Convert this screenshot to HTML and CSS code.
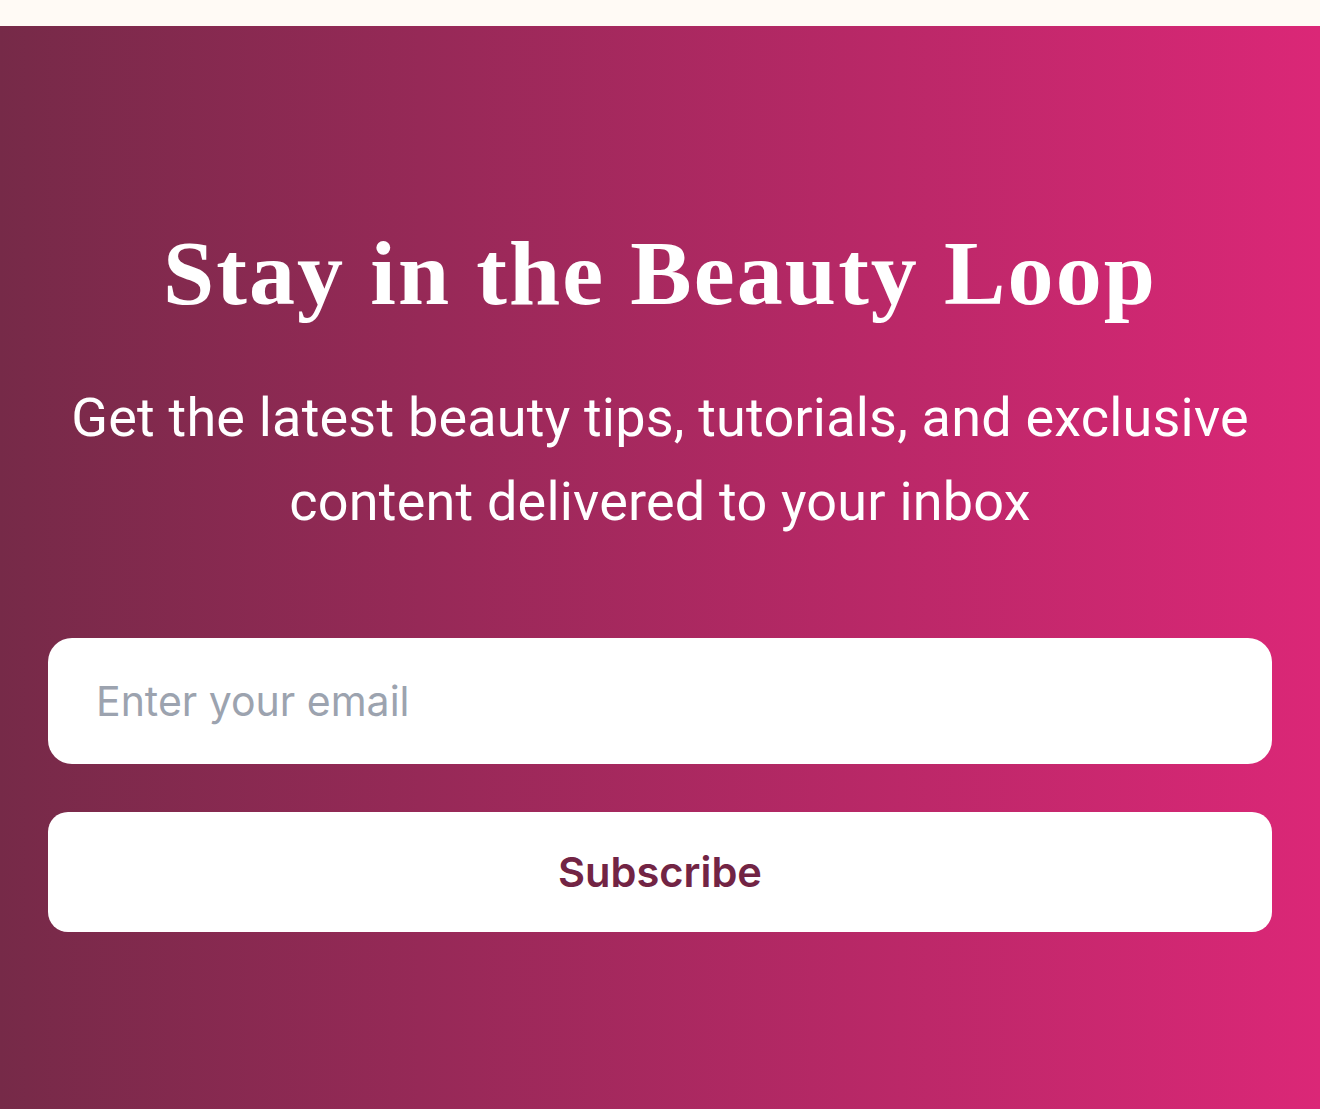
FILE: index.html
```html
<!DOCTYPE html>
<html lang="en">
<head>
<meta charset="utf-8">
<title>Stay in the Beauty Loop</title>
<link rel="stylesheet" href="styles.css">
</head>
<body>
<div class="topbar"></div>
<section class="newsletter">
  <h2 class="title">Stay in the Beauty Loop</h2>
  <p class="subtitle">Get the latest beauty tips, tutorials, and exclusive content delivered to your inbox</p>
  <form class="form" onsubmit="return false;">
    <input class="email" type="email" placeholder="Enter your email">
    <button class="subscribe" type="submit">Subscribe</button>
  </form>
</section>
</body>
</html>
```

FILE: styles.css
```css
html, body {
  margin: 0;
  padding: 0;
}
body {
  background: #fffaf5;
  width: 1320px;
  height: 1109px;
  overflow: hidden;
}
.topbar {
  height: 26px;
  background: #fffaf5;
}
.newsletter {
  background: linear-gradient(to right, #762a48, #db2777);
  padding: 193px 48px 200px;
  display: flex;
  flex-direction: column;
  align-items: stretch;
  text-align: center;
  color: #ffffff;
}
.title {
  margin: 0;
  font-family: "Liberation Serif", "DejaVu Serif", serif;
  font-weight: 700;
  font-size: 92px;
  line-height: 108px;
  letter-spacing: 2.1px;
}
.subtitle {
  margin: 49px 0 0;
  font-family: Roboto, "Liberation Sans", sans-serif;
  font-weight: 400;
  font-size: 54px;
  line-height: 84px;
  letter-spacing: 0.2px;
}
.form {
  margin-top: 94px;
  display: flex;
  flex-direction: column;
  gap: 48px;
}
.email {
  box-sizing: border-box;
  height: 126px;
  width: 100%;
  border: none;
  outline: none;
  border-radius: 24px;
  background: #ffffff;
  padding: 0 48px;
  font-family: Inter, "Noto Sans", sans-serif;
  font-size: 41px;
  color: #1f2937;
}
.email::placeholder {
  color: #9ca3af;
}
.subscribe {
  box-sizing: border-box;
  height: 120px;
  width: 100%;
  border: none;
  border-radius: 20px;
  background: #ffffff;
  font-family: Inter, "Noto Sans", sans-serif;
  font-weight: 600;
  font-size: 41.6px;
  color: #722444;
  cursor: pointer;
}
```
